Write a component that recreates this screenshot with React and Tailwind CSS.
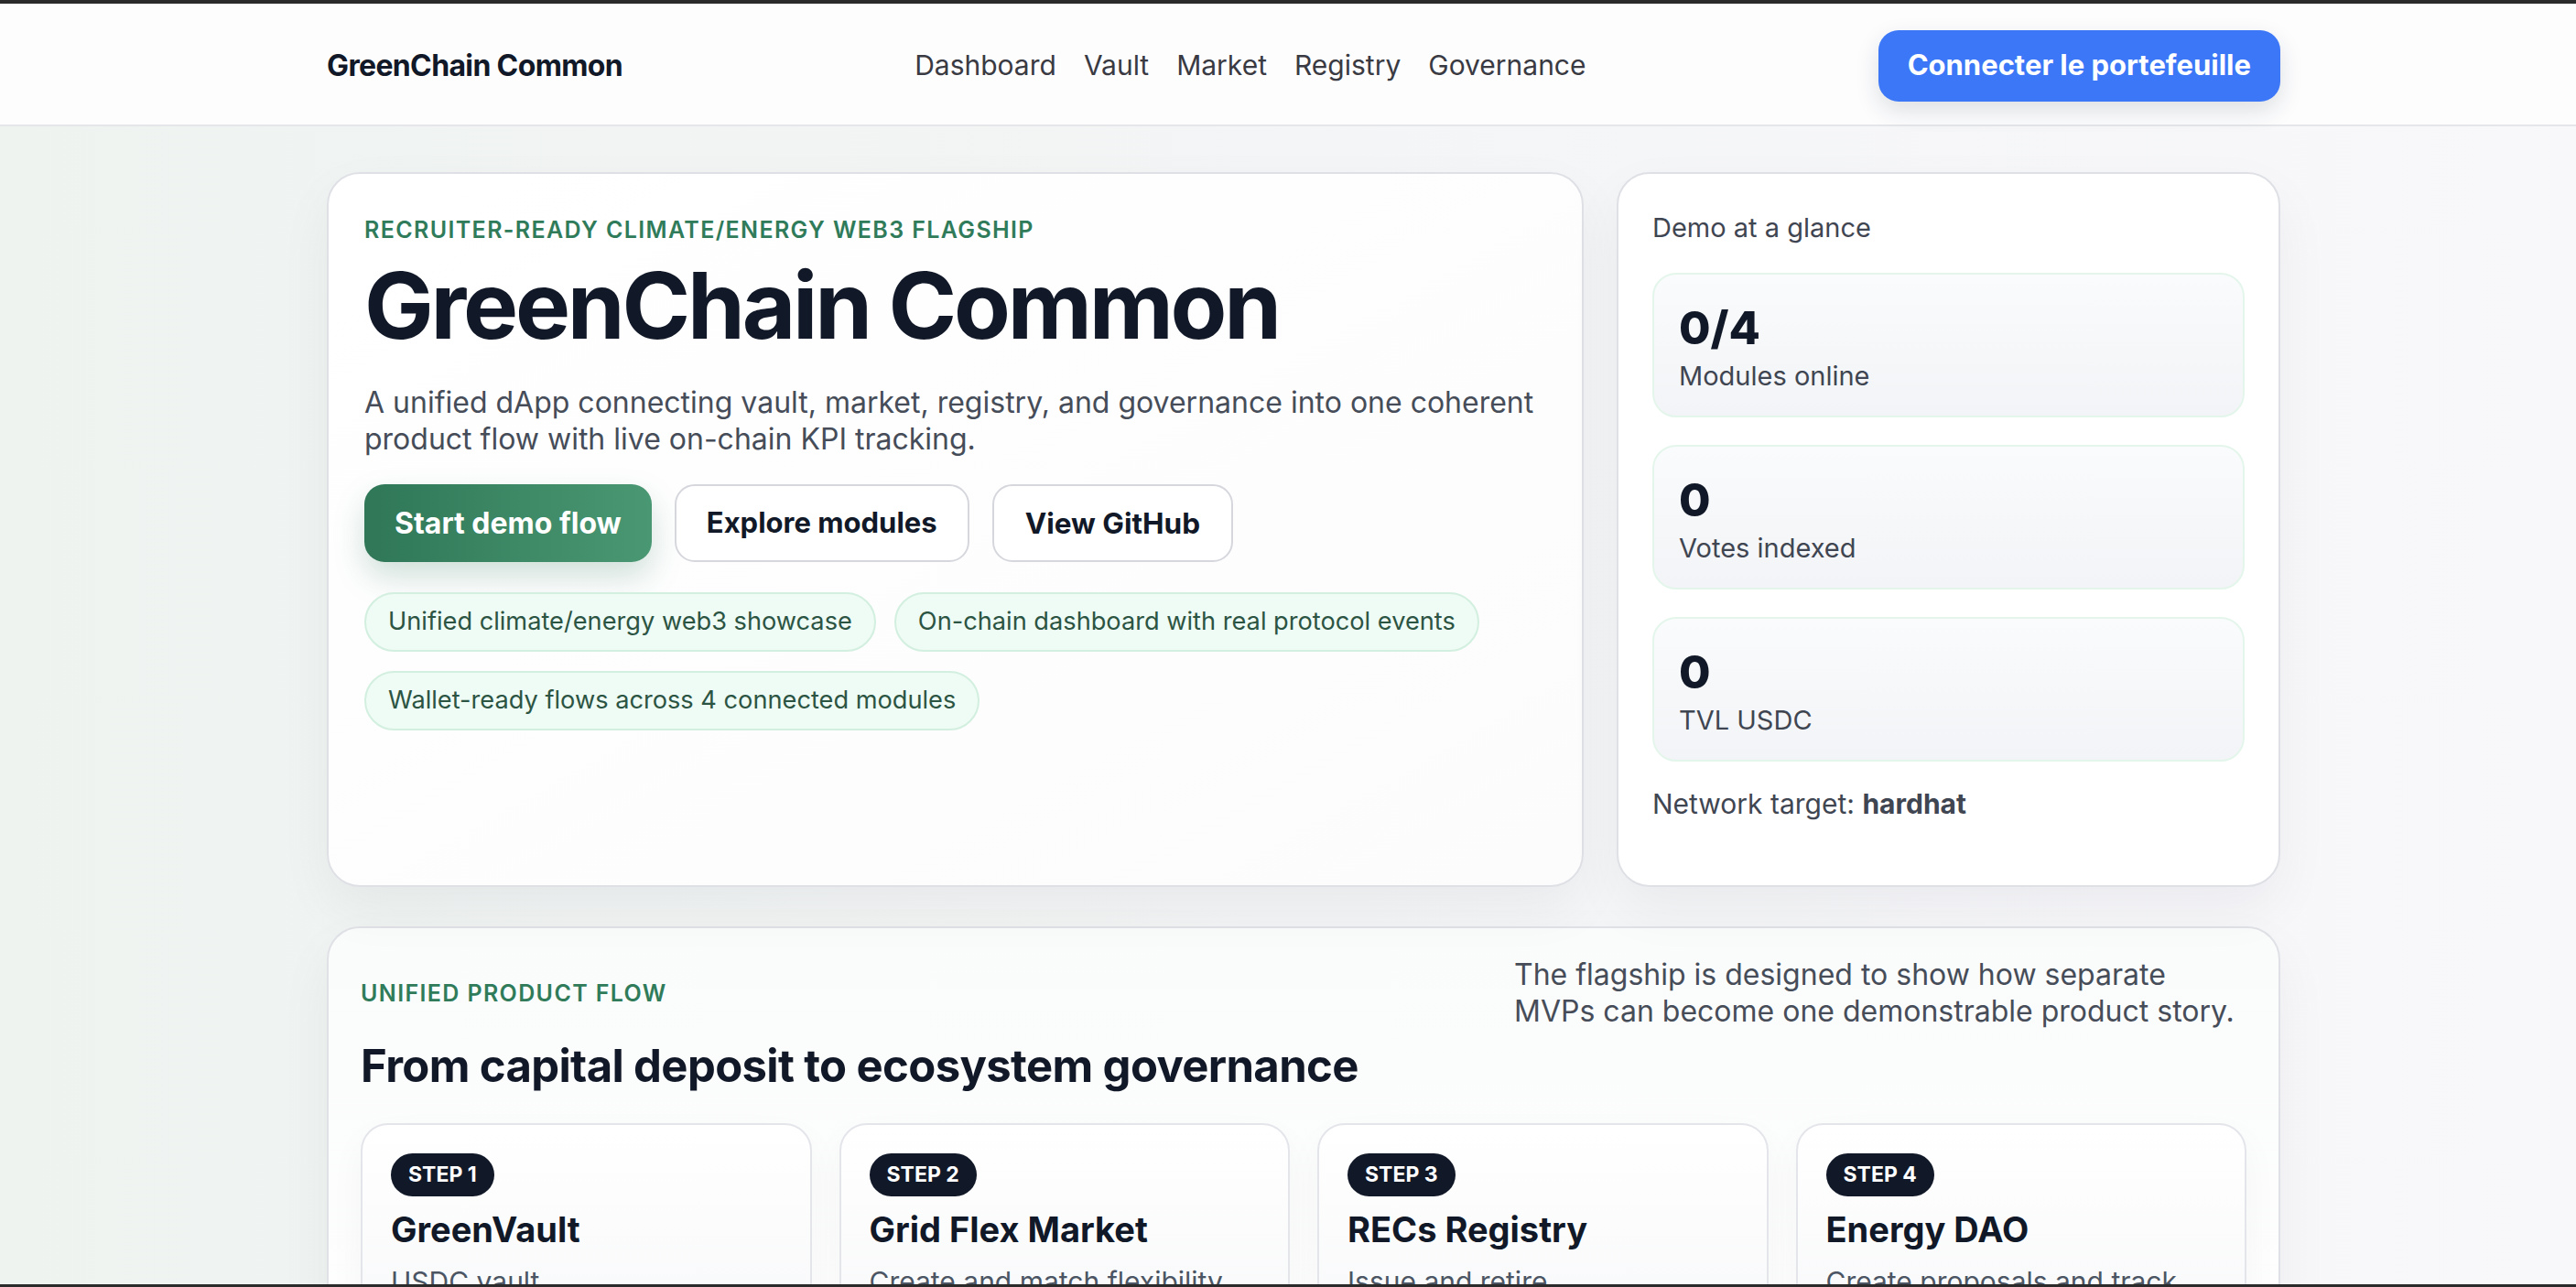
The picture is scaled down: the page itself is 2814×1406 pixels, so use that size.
const navItems = ["Dashboard", "Vault", "Market", "Registry", "Governance"];

const chips = [
  "Unified climate/energy web3 showcase",
  "On-chain dashboard with real protocol events",
  "Wallet-ready flows across 4 connected modules",
];

const stats = [
  { value: "0/4", label: "Modules online" },
  { value: "0", label: "Votes indexed" },
  { value: "0", label: "TVL USDC" },
];

const steps = [
  {
    step: "Step 1",
    title: "GreenVault",
    text: "USDC vault deposits/withdrawals with live share accounting.",
  },
  {
    step: "Step 2",
    title: "Grid Flex Market",
    text: "Create and match flexibility offers between producers and the grid.",
  },
  {
    step: "Step 3",
    title: "RECs Registry",
    text: "Issue and retire renewable\u2011energy certificates (RECs).",
  },
  {
    step: "Step 4",
    title: "Energy DAO",
    text: "Create proposals and track votes across the ecosystem.",
  },
];

function Eyebrow({ children }) {
  return (
    <p className="text-[25px] font-semibold uppercase leading-[35px] tracking-[0.055em] text-[#2f7b5a]">
      {children}
    </p>
  );
}

export default function App() {
  return (
    <div className="h-[1406px] overflow-hidden border-t-4 border-b-[3px] border-[#2b2b2b] bg-gradient-to-r from-[#eef3f0] via-[#f4f5f6] to-[#f8f8fb] font-['Inter',sans-serif] text-[#111827]">
      <header className="h-[134px] border-b-2 border-[#e5e6ea] bg-[#fdfdfe] pl-[34px]">
        <div className="mx-auto flex h-full w-[2134px] items-center justify-between pt-[3px]">
          <span className="text-[32px] font-bold tracking-[-0.02em]">
            GreenChain Common
          </span>
          <nav className="flex items-center gap-[30px] text-[30px] text-[#3a3a42]">
            {navItems.map((item) => (
              <a key={item} href="#">
                {item}
              </a>
            ))}
          </nav>
          <button
            type="button"
            className="h-[78px] rounded-[22px] bg-[#3b77f6] px-[32px] text-[31px] font-bold text-white shadow-[0_10px_26px_rgba(30,41,59,0.14)]"
          >
            Connecter le portefeuille
          </button>
        </div>
      </header>

      <main className="pl-[34px] pt-[50px]">
        <div className="mx-auto w-[2134px]">
          <div className="grid min-h-[781px] grid-cols-[1373px_725px] gap-[36px]">
            <section className="rounded-[36px] border-2 border-[#dfe0e5] bg-gradient-to-br from-white to-[#fcfcfd] px-[39px] pt-[44px] shadow-[0_24px_60px_rgba(15,23,42,0.05)]">
              <Eyebrow>Recruiter-ready climate/energy web3 flagship</Eyebrow>
              <h1 className="mt-[7px] text-[101px] font-bold leading-[114px] tracking-[-0.032em]">
                GreenChain Common
              </h1>
              <p className="mt-[30px] text-[32px] leading-[40px] text-[#464d59]">
                A unified dApp connecting vault, market, registry, and governance
                into one coherent product flow with live on-chain KPI tracking.
              </p>
              <div className="mt-[29px] flex gap-[25px]">
                <button
                  type="button"
                  className="h-[85px] rounded-[22px] bg-gradient-to-r from-[#2f7757] to-[#4a9873] px-[33px] text-[32px] font-bold text-white shadow-[0_16px_34px_rgba(47,119,87,0.22)]"
                >
                  Start demo flow
                </button>
                <button
                  type="button"
                  className="h-[85px] rounded-[22px] border-2 border-[#d6d7dd] bg-white px-[33px] text-[31px] font-bold"
                >
                  Explore modules
                </button>
                <button
                  type="button"
                  className="h-[85px] rounded-[22px] border-2 border-[#d6d7dd] bg-white px-[34px] text-[31.5px] font-bold"
                >
                  View GitHub
                </button>
              </div>
              <div className="mt-[33px] flex flex-wrap gap-x-[20px] gap-y-[21px]">
                {chips.map((chip) => (
                  <span
                    key={chip}
                    className="flex h-[65px] items-center rounded-full border-2 border-[#d2efdf] bg-[#effbf5] px-[24px] text-[27.2px] text-[#2c5443]"
                  >
                    {chip}
                  </span>
                ))}
              </div>
            </section>

            <aside className="rounded-[36px] border-2 border-[#dfe0e5] bg-white px-[37px] pt-[37px] shadow-[0_24px_60px_rgba(15,23,42,0.05)]">
              <p className="text-[29px] leading-[43px] text-[#3f4652]">
                Demo at a glance
              </p>
              <div className="mt-[28px] flex flex-col gap-[30px]">
                {stats.map((stat) => (
                  <div
                    key={stat.label}
                    className="h-[158px] rounded-[26px] border-2 border-[#e4f6ec] bg-gradient-to-b from-[#fafbfc] to-[#f3f4f7] px-[27px] pt-[28px]"
                  >
                    <p className="text-[50px] font-extrabold leading-[60px]">
                      {stat.value}
                    </p>
                    <p className="mt-[2px] text-[29px] leading-[42px] text-[#3f4652]">
                      {stat.label}
                    </p>
                  </div>
                ))}
              </div>
              <p className="mt-[30px] text-[30px] leading-[32px] text-[#3f4652]">
                Network target: <strong className="font-bold">hardhat</strong>
              </p>
            </aside>
          </div>

          <section className="mt-[43px] rounded-[36px] border-2 border-[#e0e1e6] bg-gradient-to-b from-[#fafbfb] to-white px-[35px] pb-[40px] pt-[31px] shadow-[0_24px_60px_rgba(15,23,42,0.05)]">
            <div className="flex items-center justify-between">
              <Eyebrow>Unified product flow</Eyebrow>
              <p className="w-[800px] text-[32px] leading-[40px] text-[#464d59]">
                The flagship is designed to show how separate MVPs can become one
                demonstrable product story.
              </p>
            </div>
            <h2 className="mt-[10px] text-[49px] font-bold leading-[60px] tracking-[-0.013em]">
              From capital deposit to ecosystem governance
            </h2>
            <div className="mt-[32px] grid grid-cols-4 gap-[30px]">
              {steps.map((s) => (
                <article
                  key={s.step}
                  className="rounded-[30px] border-2 border-[#e4e5ea] bg-gradient-to-b from-white to-[#f5f6f8] px-[31px] pb-[40px] pt-[31px] shadow-[0_16px_40px_rgba(15,23,42,0.04)]"
                >
                  <span className="inline-flex h-[47px] items-center rounded-full bg-[#111827] px-[19px] text-[23px] font-bold uppercase text-white">
                    {s.step}
                  </span>
                  <h3 className="mt-[12px] text-[38px] font-bold leading-[48px]">
                    {s.title}
                  </h3>
                  <p className="mt-[12px] text-[30px] leading-[42px] text-[#4b5563]">
                    {s.text}
                  </p>
                </article>
              ))}
            </div>
          </section>
        </div>
      </main>
    </div>
  );
}
